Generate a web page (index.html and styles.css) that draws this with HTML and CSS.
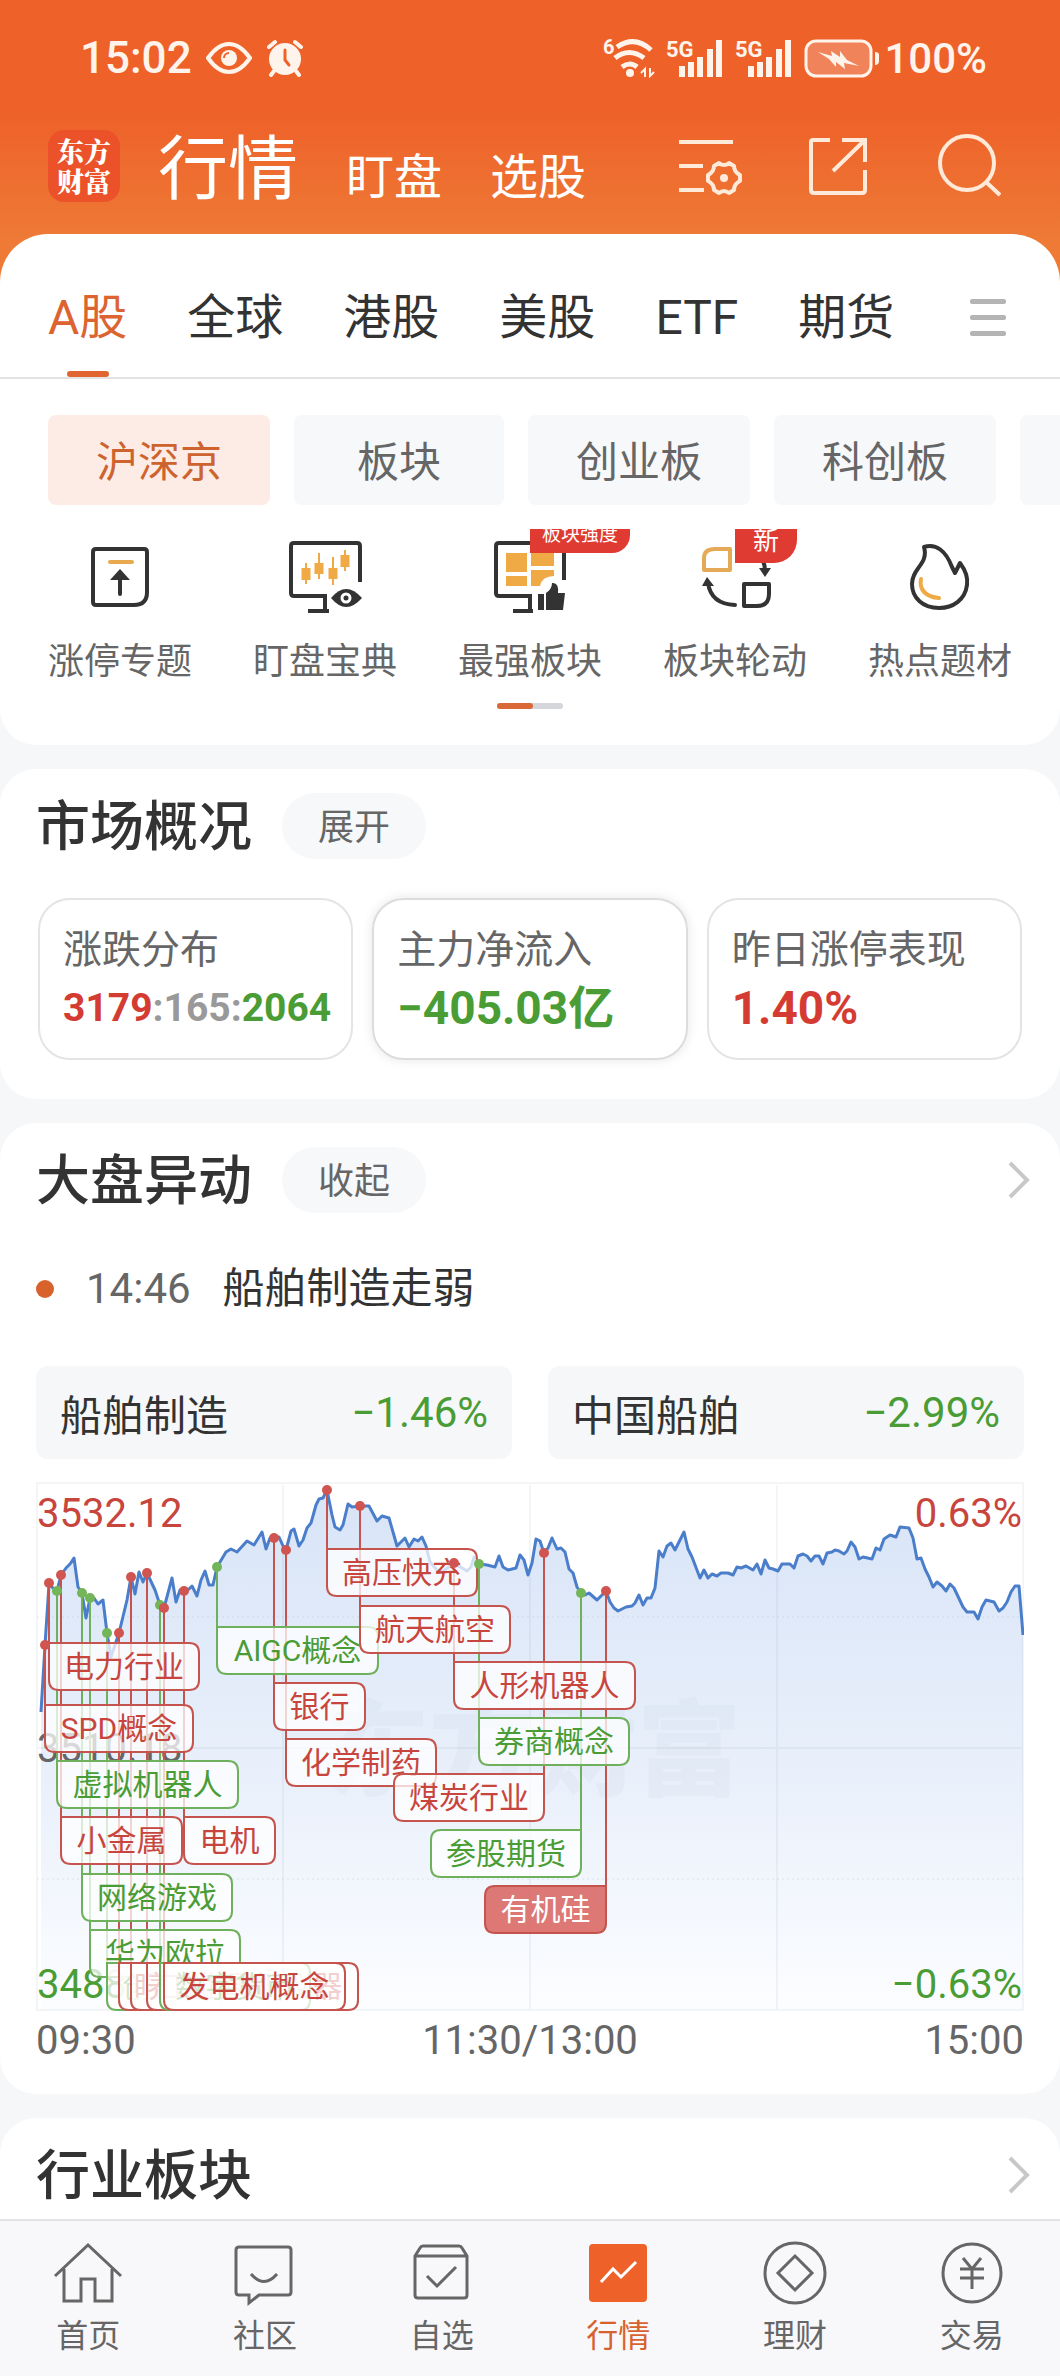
FILE: index.html
```html
<!DOCTYPE html>
<html lang="zh-CN">

<head>
  <meta charset="utf-8">
  <meta name="viewport" content="width=device-width, initial-scale=1">
  <title>行情</title>
  <link rel="stylesheet" href="styles.css">
</head>

<body>
  <header class="header">
    <div class="status">
      <div class="status-left">
        <span class="clock">15:02</span>
        <svg width="46" height="36" viewBox="0 0 46 36" fill="none" stroke="#fff4ec" stroke-width="4">
          <path d="M2 18C9 8 15 4 23 4s14 4 21 14c-7 10-13 14-21 14S9 28 2 18z" />
          <circle cx="23" cy="18" r="8" fill="#fff4ec" stroke="none" />
          <path d="M18 18a5 5 0 0 1 5-5" stroke="#ee622a" stroke-width="2" />
        </svg>
        <svg width="38" height="38" viewBox="0 0 38 38" fill="none" stroke="#fff4ec" stroke-width="4" stroke-linecap="round">
          <circle cx="19" cy="20" r="16" fill="#fff4ec" stroke="none" />
          <path d="M3 8l6-5M35 8l-6-5M8 32l-3 4M30 32l3 4" />
          <path d="M19 11v10l4 5" stroke="#ee622a" stroke-width="3" />
        </svg>
      </div>
      <div class="status-right">
        <svg width="52" height="40" viewBox="0 0 52 40" fill="none" stroke="#fff4ec" stroke-width="5">
          <text class="tiny" x="0" y="16">6</text>
          <path d="M14 9q18-12 34 3M12 20q14-11 29 0M19 29q8-6 15 0" />
          <circle cx="27" cy="35" r="4" fill="#fff4ec" stroke="none" />
          <path d="M38 35l4-4v8M47 30v8l4-4" stroke-width="2" />
        </svg>
        <svg width="58" height="40" viewBox="0 0 58 40" fill="#fff4ec">
          <text class="tiny net" x="0" y="19">5G</text>
          <path d="M13 28h6v11h-6zM22 24h6v15h-6zM31 19h6v20h-6zM41 11h6v28h-6zM50 2h6v37h-6z" />
        </svg>
        <svg width="58" height="40" viewBox="0 0 58 40" fill="#fff4ec">
          <text class="tiny net" x="0" y="19">5G</text>
          <path d="M13 28h6v11h-6zM22 24h6v15h-6zM31 19h6v20h-6zM41 11h6v28h-6zM50 2h6v37h-6z" />
        </svg>
        <div class="battery">
          <svg width="78" height="40" viewBox="0 0 78 40">
            <rect x="2" y="3" width="65" height="35" rx="10" fill="#f0835a" stroke="#fff4ec" stroke-width="3" />
            <path d="M71 14q4 0 4 3v6q0 4-4 4z" fill="#fff4ec" />
            <path d="M14 14l14 4-1-5 9 6v-6l7 9 12 6-15-3 1 6-9-7v5l-7-8z" fill="#fff4ec" />
          </svg>
          <span>100%</span>
        </div>
      </div>
    </div>
    <div class="titlebar">
      <div class="logo"><span>东方</span><span>财富</span></div>
      <nav class="title-nav">
        <a href="#" class="current">行情</a>
        <a href="#">盯盘</a>
        <a href="#">选股</a>
      </nav>
      <div class="tools">
        <button type="button" aria-label="设置">
          <svg width="64" height="64" viewBox="0 0 64 64" fill="none" stroke="#ffe9d8" stroke-width="4">
            <path d="M0 8h54M0 32h24M0 56h25" />
            <path d="M40 29q5 4 10 0l5 3q0 6 6 9v6q-6 3-6 9l-5 3q-5-4-10 0l-5-3q0-6-6-9v-6q6-3 6-9z" stroke-linejoin="round" />
            <circle cx="45" cy="44" r="4" fill="#ffe9d8" stroke="none" />
          </svg>
        </button>
        <button type="button" aria-label="分享">
          <svg width="64" height="64" viewBox="0 0 64 64" fill="none" stroke="#ffe9d8" stroke-width="4">
            <path d="M22 6H5q-2 0-2 2v48q0 3 3 3h48q3 0 3-3V36" />
            <path d="M34 6h23v22M57 6L25 37" />
          </svg>
        </button>
        <button type="button" aria-label="搜索">
          <svg width="64" height="64" viewBox="0 0 64 64" fill="none" stroke="#ffe9d8" stroke-width="4">
            <circle cx="30" cy="29" r="27" />
            <path d="M49 48l14 13" />
          </svg>
        </button>
      </div>
    </div>
  </header>

  <main class="main">
    <section class="card top-card">
      <nav class="tabs">
        <a href="#" class="on">A股</a>
        <a href="#">全球</a>
        <a href="#">港股</a>
        <a href="#">美股</a>
        <a href="#">ETF</a>
        <a href="#">期货</a>
        <button type="button" class="more" aria-label="更多"><i></i><i></i><i></i></button>
      </nav>
      <div class="chips">
        <button type="button" class="on">沪深京</button>
        <button type="button">板块</button>
        <button type="button">创业板</button>
        <button type="button">科创板</button>
        <button type="button" aria-label="北交所"></button>
      </div>
      <div class="entries">
        <a href="#" class="entry">
          <svg width="80" height="80" viewBox="0 0 80 80" fill="none" stroke="#333" stroke-width="4">
            <path d="M16 13h48q3 0 3 3v40q0 13-13 13H16q-3 0-3-3V16q0-3 3-3z" />
            <path d="M30 26h22" stroke="#e9a94f" stroke-linecap="round" />
            <path d="M40 58V40" stroke-linecap="round" />
            <path d="M30 44l10-11 10 11z" fill="#333" stroke="none" />
          </svg>
          <span>涨停专题</span>
        </a>
        <a href="#" class="entry">
          <svg width="80" height="80" viewBox="0 0 80 80" fill="none" stroke="#333" stroke-width="4">
            <path d="M75 46V10q0-3-3-3H9q-3 0-3 3v47q0 3 3 3h31v15M23 75h21" />
            <path d="M21 27v21M34 17v26M48 21v28M60 14v21" stroke="#efaa45" stroke-width="2" />
            <path d="M21 32v12M34 27v11M48 32v11M60 19v12" stroke="#efaa45" stroke-width="9" />
            <path d="M46 62q15-18 31 0-16 18-31 0z" fill="#333" stroke="none" />
            <circle cx="61" cy="62" r="4" stroke="#fff" stroke-width="3" />
          </svg>
          <span>盯盘宝典</span>
        </a>
        <a href="#" class="entry">
          <svg width="80" height="80" viewBox="0 0 80 80" fill="none" stroke="#333" stroke-width="4">
            <path d="M74 44V10q0-3-3-3H9q-3 0-3 3v47q0 3 3 3h31v15M23 75h20" />
            <path d="M16 17h21v19H16zM41 17h23v13H41zM16 40h21v10H16zM41 34h23v6q-12 0-14 10h-9z" fill="#efaa45" stroke="none" />
            <path d="M48 58h6v16h-6zM56 57q6-4 6-10 7-1 6 10h7l-2 17H56z" fill="#333" stroke="none" />
          </svg>
          <span>最强板块</span>
          <b class="badge">板块强度</b>
        </a>
        <a href="#" class="entry">
          <svg width="80" height="80" viewBox="0 0 80 80" fill="none" stroke="#333" stroke-width="4">
            <path d="M9 34V22q0-9 11-9h15v21z" stroke="#e5aa58" stroke-linejoin="round" />
            <path d="M49 48h25v10q0 12-12 12H49z" stroke-linejoin="round" />
            <path d="M40 69Q16 68 13 47" stroke-linecap="round" />
            <path d="M68 25q2 4 2 10" />
            <path d="M7 50l5-9 7 9zM64 32h12l-6 9z" fill="#333" stroke="none" />
          </svg>
          <span>板块轮动</span>
          <b class="badge big">新</b>
        </a>
        <a href="#" class="entry">
          <svg width="80" height="80" viewBox="0 0 80 80" fill="none" stroke="#333" stroke-width="4" stroke-linejoin="round">
            <path d="M24 11c12-4 22 4 28 20l3 6 5-10c6 8 8 15 7 22-2 15-14 23-28 23-16 0-27-10-27-24 0-16 17-20 12-37z" />
            <path d="M21 43c-2 11 5 18 18 19" stroke="#efaa45" stroke-linecap="round" />
          </svg>
          <span>热点题材</span>
        </a>
      </div>
      <div class="pager"><i></i></div>
    </section>

    <section class="card">
      <div class="card-head">
        <h2>市场概况</h2>
        <button type="button" class="pill">展开</button>
      </div>
      <div class="stats">
        <div class="stat">
          <p>涨跌分布</p>
          <strong class="small"><span class="up">3179</span><span class="flat">:165:</span><span class="down">2064</span></strong>
        </div>
        <div class="stat active">
          <p>主力净流入</p>
          <strong class="down">−405.03亿</strong>
        </div>
        <div class="stat">
          <p>昨日涨停表现</p>
          <strong class="up">1.40%</strong>
        </div>
      </div>
    </section>

    <section class="card">
      <div class="card-head">
        <h2>大盘异动</h2>
        <button type="button" class="pill">收起</button>
        <a href="#" class="arrow" aria-label="大盘异动详情">
          <svg width="24" height="40" viewBox="0 0 24 40" fill="none" stroke="#c8c8c8" stroke-width="4"><path d="M3 3l17 17L3 37" /></svg>
        </a>
      </div>
      <div class="event">
        <i></i><time>14:46</time><span>船舶制造走弱</span>
      </div>
      <div class="quotes">
        <a href="#" class="quote"><span>船舶制造</span><span class="down">−1.46%</span></a>
        <a href="#" class="quote"><span>中国船舶</span><span class="down">−2.99%</span></a>
      </div>
      <svg class="chart" viewBox="0 0 988 532">
        <defs>
          <linearGradient id="area" x1="0" y1="0" x2="0" y2="1">
            <stop offset="0" stop-color="#d8e4f7" />
            <stop offset="0.55" stop-color="#e9f0fb" />
            <stop offset="1" stop-color="#fcfdff" />
          </linearGradient>
        </defs>
        <polygon id="fill" fill="url(#area)" />
        <text class="watermark" x="289" y="308">东方财富</text>
        <path class="grid" d="M1 3h986v527H1zM247 5v525M494 5v525M741 5v525M1 268h986" />
        <path class="grid dotted" d="M1 137h986M1 399h986" />
        <polyline id="line" class="line" />
        <text class="axis up" x="1" y="47">3532.12</text>
        <text class="axis" x="1" y="282">3510.18</text>
        <text class="axis down" x="1" y="518">3488.24</text>
        <text class="axis up end" x="986" y="47">0.63%</text>
        <text class="axis down end" x="986" y="518">−0.63%</text>
        <g id="tags"></g>
      </svg>
      <div class="times"><span>09:30</span><span>11:30/13:00</span><span>15:00</span></div>
    </section>

    <section class="card last">
      <div class="card-head">
        <h2>行业板块</h2>
        <a href="#" class="arrow" aria-label="行业板块详情">
          <svg width="24" height="40" viewBox="0 0 24 40" fill="none" stroke="#c8c8c8" stroke-width="4"><path d="M3 3l17 17L3 37" /></svg>
        </a>
      </div>
    </section>
  </main>

  <nav class="bottom">
    <a href="#">
      <svg width="72" height="72" viewBox="0 0 72 72"><path d="M3 38L36 7l33 31M12 31v32h17V41h14v22h17V31" /></svg>
      <span>首页</span>
    </a>
    <a href="#">
      <svg width="72" height="72" viewBox="0 0 72 72"><path d="M10 9h49q3 0 3 3v42q0 3-3 3H30l-10 8v-8H10q-3 0-3-3V12q0-3 3-3zM22 36q13 15 26 0" /></svg>
      <span>社区</span>
    </a>
    <a href="#">
      <svg width="72" height="72" viewBox="0 0 72 72"><path d="M9 18l5-8q1-2 3-2h36q2 0 3 2l5 8v39q0 3-3 3H12q-3 0-3-3zM9 18h52M21 38l10 10 19-19" /></svg>
      <span>自选</span>
    </a>
    <a href="#" class="on">
      <svg width="72" height="72" viewBox="0 0 72 72"><rect x="7" y="6" width="58" height="58" rx="4" /><path d="M19 44l12-13 8 8 15-15" /></svg>
      <span>行情</span>
    </a>
    <a href="#">
      <svg width="72" height="72" viewBox="0 0 72 72"><circle cx="36" cy="35" r="30" /><path d="M36 18l17 17-17 17-17-17z" /></svg>
      <span>理财</span>
    </a>
    <a href="#">
      <svg width="72" height="72" viewBox="0 0 72 72"><circle cx="36" cy="35" r="29" /><path d="M27 20l9 11 9-11M36 31v20M24 31h24M24 40h24" /></svg>
      <span>交易</span>
    </a>
  </nav>

  <script src="script.js"></script>
</body>

</html>
```
FILE: styles.css
```css
* {
  box-sizing: border-box;
}

body {
  margin: 0;
  min-height: 100vh;
  display: flex;
  flex-direction: column;
  background: #f6f7f9;
  color: #333;
  font-family: Roboto, "Noto Sans CJK SC", sans-serif;
}

a {
  color: inherit;
  text-decoration: none;
}

button {
  margin: 0;
  padding: 0;
  border: none;
  background: none;
  color: inherit;
  font-family: inherit;
  cursor: pointer;
}

svg {
  display: block;
  flex: none;
}

h2,
p {
  margin: 0;
}

.up {
  color: #d43c33;
  fill: #c8453d;
}

.down {
  color: #4a9c35;
  fill: #4a9c35;
}

.flat {
  color: #999;
}

/* header */
.header {
  padding-bottom: 66px;
  background: linear-gradient(#ee622a 0, #ee622a 116px, #ee7a36 240px);
  color: #fff;
}

.status {
  height: 116px;
  padding: 0 73px 0 80px;
  display: flex;
  justify-content: space-between;
  align-items: center;
  color: #fff4ec;
}

.status-left,
.status-right {
  display: flex;
  align-items: center;
  gap: 14px;
}

.status-right {
  gap: 11px;
}

.clock {
  font-size: 44px;
  font-weight: 500;
}

.battery {
  display: flex;
  align-items: center;
  gap: 2px;
  font-size: 42px;
  font-weight: 500;
}

.tiny {
  font-size: 20px;
  font-weight: 700;
  fill: #fff4ec;
  stroke: none;
}

.net {
  font-size: 22px;
}

.titlebar {
  height: 100px;
  padding: 0 59px 0 48px;
  display: flex;
  align-items: center;
}

.logo {
  width: 72px;
  height: 72px;
  border-radius: 16px;
  background: #ec5229;
  display: flex;
  flex-direction: column;
  justify-content: center;
  align-items: center;
  font-family: "Noto Serif CJK SC", "Noto Sans CJK SC", serif;
  font-size: 27px;
  line-height: 30px;
  font-weight: 900;
}

.title-nav {
  margin-left: 38px;
  padding-top: 16px;
  display: flex;
  align-items: baseline;
  gap: 48px;
  font-size: 48px;
  line-height: 84px;
}

.title-nav .current {
  font-size: 70px;
}

.tools {
  margin-left: auto;
  display: flex;
  gap: 65px;
}

/* cards */
.main {
  flex: 1;
  margin-top: -48px;
  display: flex;
  flex-direction: column;
  gap: 24px;
}

.card {
  padding: 24px 36px;
  border-radius: 36px;
  background: #fff;
}

.top-card {
  padding: 0 0 36px;
  border-radius: 48px 48px 36px 36px;
}

.last {
  flex: 1;
  padding-bottom: 10px;
  border-radius: 36px 36px 0 0;
}

.tabs {
  height: 145px;
  padding: 24px 54px 0 48px;
  border-bottom: 2px solid #e3e3e3;
  display: flex;
  gap: 60px;
  font-size: 48px;
  line-height: 120px;
}

.tabs .on {
  position: relative;
  color: #dc6431;
}

.tabs .on::after {
  content: "";
  position: absolute;
  left: 50%;
  bottom: 0;
  width: 42px;
  height: 6px;
  margin-left: -21px;
  border-radius: 3px;
  background: #e0652f;
}

.more {
  width: 36px;
  margin-left: auto;
  display: flex;
  flex-direction: column;
  justify-content: center;
  gap: 11px;
}

.more i {
  height: 5px;
  border-radius: 2px;
  background: #b4b4b4;
}

.chips {
  padding: 36px 0 24px 48px;
  display: flex;
  gap: 24px;
  overflow: hidden;
}

.chips button {
  flex: none;
  min-width: 210px;
  height: 90px;
  padding: 0 48px 4px;
  border-radius: 8px;
  background: #f7f8fa;
  color: #666;
  font-size: 42px;
}

.chips .on {
  background: #fdece5;
  color: #cd632e;
}

.entries {
  padding: 0 48px;
  display: flex;
  justify-content: space-between;
  overflow: hidden;
}

.entry {
  position: relative;
  padding-top: 7px;
  display: flex;
  flex-direction: column;
  align-items: center;
  gap: 22px;
  color: #666;
  font-size: 36px;
  line-height: 48px;
}

.badge {
  position: absolute;
  top: -12px;
  left: 72px;
  height: 36px;
  padding: 0 12px;
  border-radius: 0 0 18px 0;
  background: #df3b32;
  color: #fff;
  font-size: 19px;
  line-height: 36px;
  font-weight: 400;
  white-space: nowrap;
}

.badge.big {
  height: 46px;
  padding: 0 18px;
  border-radius: 0 0 23px 0;
  font-size: 26px;
  line-height: 48px;
}

.pager {
  width: 66px;
  height: 6px;
  margin: 17px auto 0;
  border-radius: 3px;
  background: #d5d6dc;
}

.pager i {
  display: block;
  width: 36px;
  height: 6px;
  border-radius: 3px;
  background: #d96a37;
}

.card-head {
  height: 66px;
  display: flex;
  align-items: center;
  gap: 30px;
}

.card-head h2 {
  padding-top: 4px;
  font-size: 54px;
  line-height: 66px;
  font-weight: 500;
}

.pill {
  height: 66px;
  padding: 0 36px 4px;
  border-radius: 33px;
  background: #f6f8fa;
  color: #666;
  font-size: 36px;
}

.arrow {
  margin-left: auto;
  margin-right: -7px;
}

.stats {
  margin: 39px 2px 15px;
  display: grid;
  grid-template-columns: repeat(3, 1fr);
  gap: 19px;
}

.stat {
  min-width: 0;
  padding: 24px 0 18px 23px;
  border: 2px solid #e4e4e4;
  border-radius: 32px;
  white-space: nowrap;
}

.stat.active {
  border-color: #dcdcdc;
  box-shadow: 0 0 12px rgba(0, 0, 0, 0.1);
}

.stat p {
  color: #666;
  font-size: 39px;
  line-height: 52px;
}

.stat strong {
  display: block;
  font-size: 46px;
  line-height: 64px;
}

.stat .small {
  font-size: 39px;
}

.event {
  margin-top: 46px;
  display: flex;
  align-items: center;
  font-size: 42px;
  line-height: 60px;
}

.event i {
  width: 18px;
  height: 18px;
  border-radius: 9px;
  background: #d8622c;
}

.event time {
  margin: 0 32px 0 32px;
  color: #666;
}

.quotes {
  margin-top: 47px;
  display: grid;
  grid-template-columns: 1fr 1fr;
  gap: 36px;
}

.quote {
  height: 93px;
  padding: 0 24px;
  border-radius: 12px;
  background: #f6f7f9;
  display: flex;
  justify-content: space-between;
  align-items: center;
  font-size: 42px;
}

.times {
  display: grid;
  grid-template-columns: 1fr auto 1fr;
  color: #666;
  font-size: 40px;
  line-height: 58px;
}

.times span:last-child {
  text-align: right;
}

/* chart */
.chart {
  width: 100%;
  height: auto;
  margin-top: 21px;
}

.watermark {
  font-size: 104px;
  font-weight: 900;
  fill: #26395c;
  opacity: 0.025;
}

.grid {
  fill: none;
  stroke: #5a6e91;
  stroke-opacity: 0.07;
  stroke-width: 2;
}

.dotted {
  stroke-dasharray: 2 3;
}

.line {
  fill: none;
  stroke: #4a7ecb;
  stroke-width: 3;
  stroke-linejoin: round;
}

.axis {
  font-size: 40px;
}

.axis:not(.up):not(.down) {
  fill: #666;
}

.end {
  text-anchor: end;
}

.tag-line {
  stroke-width: 2;
}

.tag-box {
  fill: #fff;
  fill-opacity: 0.75;
  stroke-width: 2;
}

.tag-text {
  font-size: 30px;
  text-anchor: middle;
}

.red {
  stroke: #c5544e;
}

.green {
  stroke: #6fb05c;
}

.red-text {
  fill: #c8453d;
}

.green-text {
  fill: #4a9c35;
}

.red-dot {
  fill: #d05450;
}

.green-dot {
  fill: #73b559;
}

.solid {
  fill: #da6c69;
  fill-opacity: 0.92;
}

.solid-text {
  fill: #fff;
}

/* bottom bar */
.bottom {
  padding: 17px 0 20px;
  border-top: 2px solid #e3e3e5;
  background: #f8f8fa;
  display: grid;
  grid-template-columns: repeat(6, 1fr);
}

.bottom a {
  display: flex;
  flex-direction: column;
  align-items: center;
  gap: 6px;
  color: #666;
  font-size: 32px;
  line-height: 40px;
}

.bottom svg {
  fill: none;
  stroke: #666;
  stroke-width: 3;
}

.bottom .on {
  color: #d8622f;
}

.bottom .on rect {
  fill: #ee622a;
  stroke: none;
}

.bottom .on path {
  stroke: #fff;
}
```
FILE: script.js
```javascript
var NS = 'http://www.w3.org/2000/svg';

// 分时线
var points = '5,232 9,165 13,104 17,108 21,111 25,95 30,88 34,84 38,78 42,107 46,113 50,138 54,118 58,118 62,124 67,120 71,153 75,177 83,153 91,120 95,97 99,114 103,92 107,102 111,93 119,110 124,125 128,128 136,98 140,122 144,110 148,111 153,109 156,106 161,116 165,100 169,91 173,105 177,105 181,87 190,72 195,69 201,72 211,61 218,65 226,52 230,69 234,58 238,58 243,57 247,66 250,70 255,51 258,49 263,66 267,60 271,48 275,43 280,25 283,19 287,18 291,10 296,35 299,47 304,50 307,45 312,24 316,27 324,26 333,26 341,41 346,36 353,38 361,66 369,58 373,67 378,59 382,61 386,57 390,66 394,82 401,90 406,92 418,83 431,91 435,87 438,77 443,84 451,85 459,87 463,76 467,87 472,90 480,88 484,75 488,80 492,95 496,83 500,59 504,61 508,73 512,68 516,58 521,69 525,68 529,72 533,89 537,93 541,107 545,113 549,115 553,113 561,120 570,111 574,122 578,128 582,131 590,127 596,126 599,123 603,115 607,125 611,118 615,118 619,108 623,71 627,77 631,66 635,63 639,70 648,52 652,69 656,77 664,98 668,90 672,98 676,94 681,96 685,93 692,93 697,95 701,87 705,88 710,86 717,90 721,84 725,94 729,80 733,88 737,89 742,91 746,84 754,84 758,88 762,76 767,74 771,76 775,81 779,76 783,76 787,84 791,73 796,72 799,70 803,71 808,74 811,71 815,62 819,67 823,79 827,77 836,79 840,68 844,70 848,59 854,55 860,57 864,47 873,48 877,58 881,79 885,78 889,89 893,97 897,107 901,102 906,106 910,111 914,104 918,108 927,127 931,132 938,132 942,139 946,127 950,120 958,122 963,131 967,128 971,122 975,112 979,106 983,106 987,155';

document.getElementById('line').setAttribute('points', points);
document.getElementById('fill').setAttribute('points', '5,530 ' + points + ' 987,530');

// 名称, x, 圆点y, 标签y, 宽, 颜色, 标签在左侧, 实心
var tags = [
  ['SPD概念', 9, 165, 225, 148, 'red'],
  ['电力行业', 13, 103, 163, 150, 'red'],
  ['虚拟机器人', 21, 111, 281, 181, 'green'],
  ['小金属', 25, 95, 337, 121, 'red'],
  ['网络游戏', 46, 113, 394, 150, 'green'],
  ['华为欧拉', 54, 118, 450, 150, 'green'],
  ['创新药', 71, 153, 483, 121, 'green'],
  ['眼科医疗', 83, 153, 483, 150, 'red'],
  ['养殖', 95, 97, 483, 91, 'red'],
  ['工业母机仪器', 111, 93, 483, 211, 'red'],
  ['数字货币', 124, 125, 483, 150, 'green'],
  ['发电机概念', 128, 128, 483, 181, 'red'],
  ['电机', 148, 111, 337, 91, 'red'],
  ['AIGC概念', 181, 87, 147, 161, 'green'],
  ['银行', 238, 58, 203, 91, 'red'],
  ['化学制药', 250, 70, 259, 150, 'red'],
  ['高压快充', 291, 10, 69, 150, 'red'],
  ['航天航空', 324, 26, 126, 150, 'red'],
  ['人形机器人', 418, 83, 182, 181, 'red'],
  ['券商概念', 443, 84, 238, 150, 'green'],
  ['煤炭行业', 508, 73, 294, 150, 'red', true],
  ['参股期货', 545, 113, 350, 150, 'green', true],
  ['有机硅', 570, 111, 406, 121, 'red', true, true]
];

var group = document.getElementById('tags');

function add(name, attrs, text) {
  var el = document.createElementNS(NS, name);
  for (var key in attrs) {
    el.setAttribute(key, attrs[key]);
  }
  if (text) {
    el.textContent = text;
  }
  group.appendChild(el);
}

// 靠竖线的上角是直角
function boxPath(x, y, w, left) {
  var h = 47;
  var r = 10;
  if (left) {
    return 'M' + x + ' ' + y + 'V' + (y + h - r) + 'q0 ' + r + ' -' + r + ' ' + r +
      'H' + (x - w + r) + 'q-' + r + ' 0 -' + r + ' -' + r + 'V' + (y + r) +
      'q0 -' + r + ' ' + r + ' -' + r + 'z';
  }
  return 'M' + x + ' ' + y + 'V' + (y + h - r) + 'q0 ' + r + ' ' + r + ' ' + r +
    'H' + (x + w - r) + 'q' + r + ' 0 ' + r + ' -' + r + 'V' + (y + r) +
    'q0 -' + r + ' -' + r + ' -' + r + 'z';
}

tags.forEach(function (t) {
  add('line', { x1: t[1], x2: t[1], y1: t[2], y2: t[3], 'class': 'tag-line ' + t[5] });
});

tags.forEach(function (t) {
  var mid = t[6] ? t[1] - t[4] / 2 : t[1] + t[4] / 2;
  add('path', { d: boxPath(t[1], t[3], t[4], t[6]), 'class': 'tag-box ' + t[5] + (t[7] ? ' solid' : '') });
  add('text', { x: mid, y: t[3] + 34, 'class': 'tag-text ' + (t[7] ? 'solid' : t[5]) + '-text' }, t[0]);
});

tags.forEach(function (t) {
  add('circle', { cx: t[1], cy: t[2], r: 5, 'class': t[5] + '-dot' });
});
```
